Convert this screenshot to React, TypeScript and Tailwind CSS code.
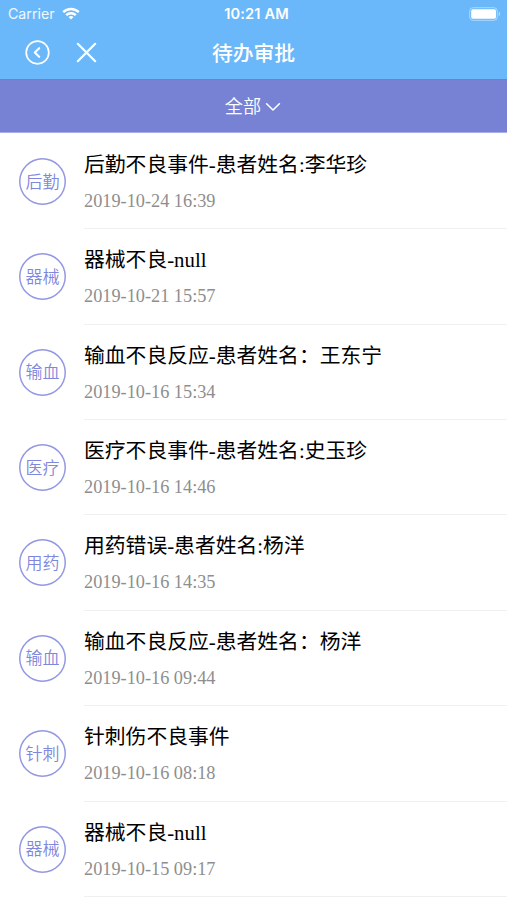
import React from "react";

type Item = {
  tag: string;
  title: string;
  time: string;
};

const items: Item[] = [
  { tag: "后勤", title: "后勤不良事件-患者姓名:李华珍", time: "2019-10-24 16:39" },
  { tag: "器械", title: "器械不良-null", time: "2019-10-21 15:57" },
  { tag: "输血", title: "输血不良反应-患者姓名：王东宁", time: "2019-10-16 15:34" },
  { tag: "医疗", title: "医疗不良事件-患者姓名:史玉珍", time: "2019-10-16 14:46" },
  { tag: "用药", title: "用药错误-患者姓名:杨洋", time: "2019-10-16 14:35" },
  { tag: "输血", title: "输血不良反应-患者姓名：杨洋", time: "2019-10-16 09:44" },
  { tag: "针刺", title: "针刺伤不良事件", time: "2019-10-16 08:18" },
  { tag: "器械", title: "器械不良-null", time: "2019-10-15 09:17" },
];

const StatusBar = () => (
  <div className="grid h-[27px] grid-cols-3 items-center pl-[8px] pr-[6px] font-['Inter','Liberation_Sans',sans-serif] text-white">
    <div className="flex items-center gap-[7px]">
      <span className="pt-px text-[14.2px] leading-none text-white/90">Carrier</span>
      <svg width="18" height="13" viewBox="0 0 18 13" fill="none" stroke="currentColor" strokeWidth="2.4">
        <path d="M1.2 5.2a11 11 0 0 1 15.6 0" />
        <path d="M4.2 8.2a6.8 6.8 0 0 1 9.6 0" />
        <path d="M9 12.6 6.5 10.1a3.6 3.6 0 0 1 5 0Z" fill="currentColor" stroke="none" />
      </svg>
    </div>
    <span className="pl-[4px] pt-[2px] text-center text-[14.6px] font-semibold leading-none tracking-[0.15px]">10:21 AM</span>
    <svg className="justify-self-end" width="32" height="14" viewBox="0 0 32 14" fill="none">
      <rect x="0.7" y="0.7" width="27.6" height="12.6" rx="3.4" stroke="white" strokeOpacity="0.45" />
      <rect x="2.2" y="2.3" width="24.8" height="9.4" rx="1.6" fill="white" />
      <path d="M29.8 4.8c1.8.6 1.8 3.8 0 4.4Z" fill="white" fillOpacity="0.5" />
    </svg>
  </div>
);

const NavBar = () => (
  <div className="grid h-[52px] grid-cols-3 items-center pb-[2px] text-white">
    <div className="flex items-center gap-[26px] pl-[25px]">
      <svg width="25" height="25" viewBox="0 0 25 25" fill="none" stroke="currentColor" strokeLinecap="round" strokeLinejoin="round">
        <circle cx="12.5" cy="12.5" r="11.3" strokeWidth="1.7" />
        <path d="M14.2 8.2 9.8 12.5l4.4 4.3" strokeWidth="2.1" />
      </svg>
      <svg width="21" height="21" viewBox="0 0 21 21" fill="none" stroke="currentColor" strokeWidth="2.2" strokeLinecap="round">
        <path d="M1.8 1.8 19.2 19.2M19.2 1.8 1.8 19.2" />
      </svg>
    </div>
    <h1 className="text-center text-[20.8px] font-medium leading-none">待办审批</h1>
  </div>
);

const FilterBar = () => (
  <div className="flex h-[54px] items-center justify-center gap-[4px] border-b border-[#a7aee6] bg-[#7882d4] pr-px text-white shadow-[inset_0_1px_1px_#6b80cf]">
    <span className="text-[18.2px] font-[350] leading-none">全部</span>
    <svg className="mt-[3px]" width="16" height="10" viewBox="0 0 16 10" fill="none" stroke="currentColor" strokeWidth="1.6" strokeLinecap="round" strokeLinejoin="round">
      <path d="M1.6 1.8 8 8l6.4-6.2" />
    </svg>
  </div>
);

const Row = ({ tag, title, time }: Item) => (
  <li className="flex h-[95.35px] pl-[19px]">
    <div className="mt-[24px] flex size-[47px] shrink-0 items-center justify-center rounded-full pb-[3px] text-[17px] font-[350] leading-none text-[#7f88dc] shadow-[inset_0_0_0_1.5px_#9498e3]">
      {tag}
    </div>
    <div className="ml-[18px] flex-1 border-b border-[#f0f0f0] pt-[16px] font-['Liberation_Serif','Noto_Sans_CJK_SC',serif]">
      <p className="h-[30px] whitespace-nowrap text-[20.8px] leading-[30px] text-black">{title}</p>
      <p className="mt-[9px] text-[18.3px] leading-[24px] text-[#8e8e8e]">{time}</p>
    </div>
  </li>
);

export default function App() {
  return (
    <div className="h-[900px] w-[507px] overflow-hidden bg-white font-['Noto_Sans_CJK_SC',sans-serif]">
      <header className="bg-[#6ab8fa]">
        <StatusBar />
        <NavBar />
      </header>
      <FilterBar />
      <ul className="pt-[1.1px]">
        {items.map((item) => (
          <Row key={item.time} {...item} />
        ))}
      </ul>
    </div>
  );
}
